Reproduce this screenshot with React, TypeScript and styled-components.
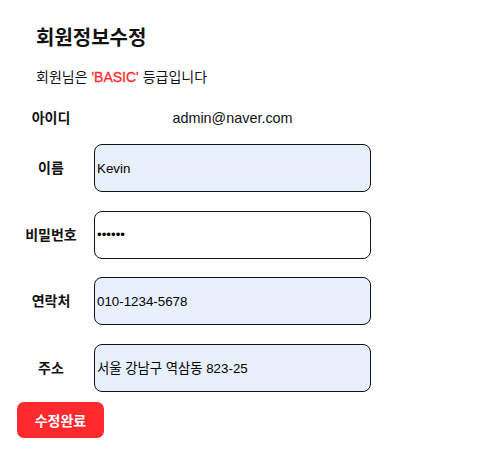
import React from "react";
import styled, { createGlobalStyle } from "styled-components";

const Global = createGlobalStyle`
  html, body { margin: 0; padding: 0; background: #fff; }
  body { font-family: "Liberation Sans", "Noto Sans CJK KR", sans-serif; color: #111; }
`;

const Page = styled.div`
  padding: 24px 0 0 17px;
  display: flex;
  flex-direction: column;
  align-items: flex-start;
`;

const Title = styled.h2`
  margin: 0 0 0 19px;
  font-size: 20px;
  font-weight: 700;
  line-height: 28px;
  color: #111;
`;

const Grade = styled.p`
  margin: 15px 0 0 19px;
  font-size: 14px;
  line-height: 20px;
  color: #111;
`;

const Level = styled.span`
  color: #ff2a2e;
  font-weight: 400;
  -webkit-text-stroke: 0.3px #ff2a2e;
`;

const Form = styled.div`
  margin-top: 21px;
  margin-left: 1px;
  display: flex;
  flex-direction: column;
`;

const Row = styled.div<{ $gap?: number }>`
  display: grid;
  grid-template-columns: 66px 277px;
  column-gap: 10px;
  align-items: center;
  margin-top: ${(p) => p.$gap ?? 0}px;
`;

const Label = styled.div`
  text-align: center;
  font-size: 14px;
  font-weight: 700;
  line-height: 20px;
`;

const Value = styled.div`
  text-align: center;
  font-size: 14.4px;
  line-height: 20px;
`;

const Input = styled.input<{ $filled?: boolean }>`
  box-sizing: border-box;
  width: 277px;
  height: 48px;
  margin: 0;
  padding: 1px 2px;
  border: 1px solid #111;
  border-radius: 8px;
  background: ${(p) => (p.$filled ? "#e8f0fe" : "#fff")};
  font-family: "Liberation Sans", "Noto Sans CJK KR", sans-serif;
  font-size: 13.33px;
  color: #000;
  outline: none;
`;

const Submit = styled.button`
  margin-top: 10px;
  width: 87px;
  height: 36px;
  border: none;
  border-radius: 7px;
  background: #ff2a2e;
  color: #fff;
  font-family: "Liberation Sans", "Noto Sans CJK KR", sans-serif;
  font-size: 14px;
  font-weight: 700;
  cursor: pointer;
`;

export default function App() {
  return (
    <>
      <Global />
      <Page>
        <Title>회원정보수정</Title>
        <Grade>
          회원님은 <Level>'BASIC'</Level> 등급입니다
        </Grade>
        <Form>
          <Row>
            <Label>아이디</Label>
            <Value>admin@naver.com</Value>
          </Row>
          <Row $gap={16}>
            <Label>이름</Label>
            <Input $filled defaultValue="Kevin" />
          </Row>
          <Row $gap={18.67}>
            <Label>비밀번호</Label>
            <Input type="password" defaultValue="123456" />
          </Row>
          <Row $gap={18.67}>
            <Label>연락처</Label>
            <Input $filled defaultValue="010-1234-5678" />
          </Row>
          <Row $gap={18.67}>
            <Label>주소</Label>
            <Input $filled defaultValue="서울 강남구 역삼동 823-25" />
          </Row>
        </Form>
        <Submit>수정완료</Submit>
      </Page>
    </>
  );
}
